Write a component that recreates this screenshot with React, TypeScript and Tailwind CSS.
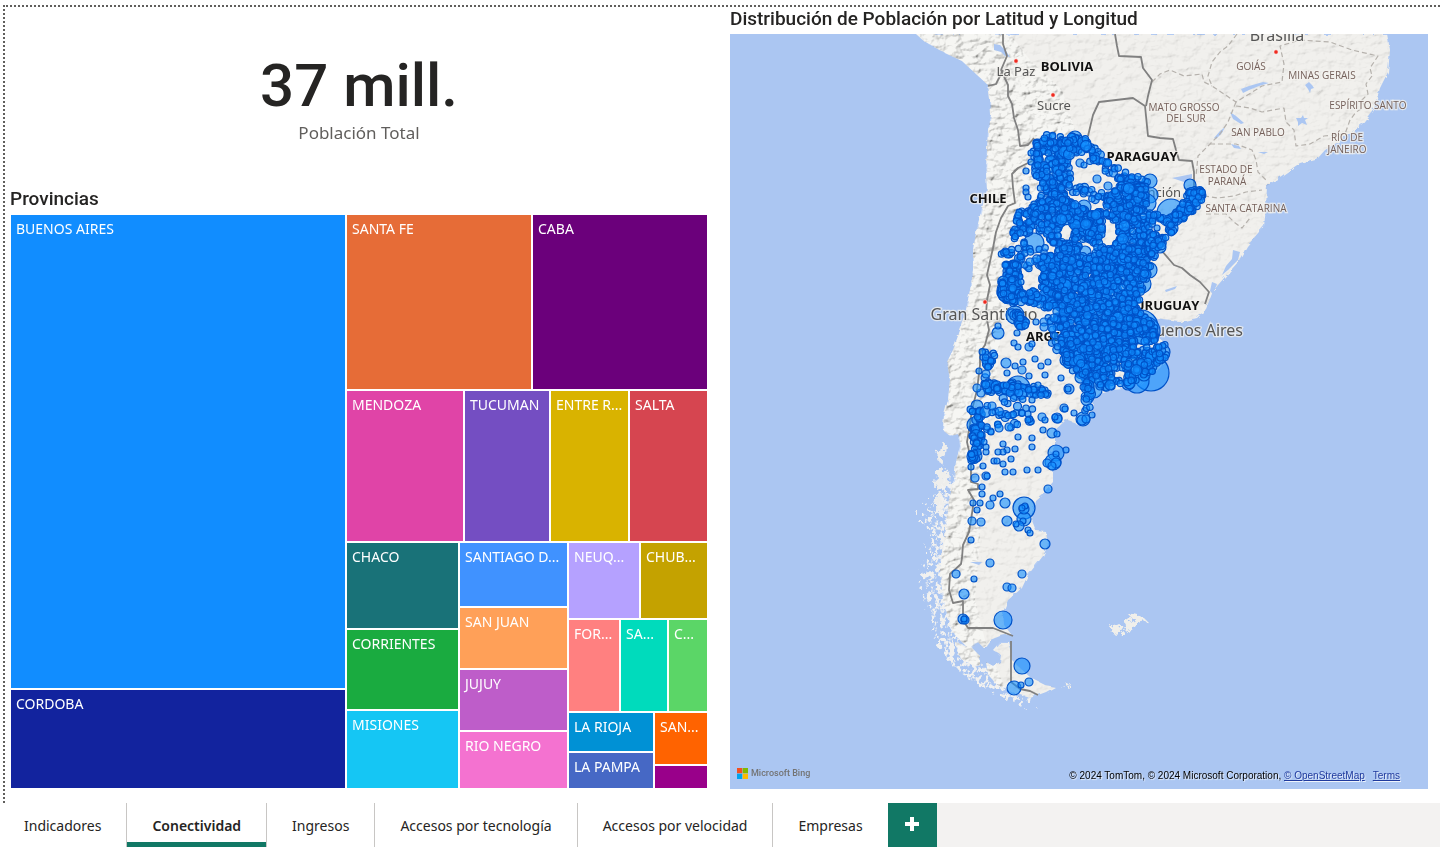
import React from 'react';
import { clsx } from 'clsx';

/* ---------- Treemap ---------- */

type Leaf = { size: number; label: string; color: string };
type Group = { size: number; dir: 'row' | 'col'; items: TreeNode[] };
type TreeNode = Leaf | Group;

const tree: Group = {
  size: 1,
  dir: 'row',
  items: [
    {
      size: 334,
      dir: 'col',
      items: [
        { size: 472, label: 'BUENOS AIRES', color: 'bg-[#118dff]' },
        { size: 98, label: 'CORDOBA', color: 'bg-[#12239e]' },
      ],
    },
    {
      size: 360,
      dir: 'col',
      items: [
        {
          size: 174,
          dir: 'row',
          items: [
            { size: 184, label: 'SANTA FE', color: 'bg-[#e66c37]' },
            { size: 174, label: 'CABA', color: 'bg-[#6b007b]' },
          ],
        },
        {
          size: 149,
          dir: 'row',
          items: [
            { size: 116, label: 'MENDOZA', color: 'bg-[#e044a7]' },
            { size: 84, label: 'TUCUMAN', color: 'bg-[#744ec2]' },
            { size: 77, label: 'ENTRE R...', color: 'bg-[#d9b300]' },
            { size: 77, label: 'SALTA', color: 'bg-[#d64550]' },
          ],
        },
        {
          size: 245,
          dir: 'row',
          items: [
            {
              size: 111,
              dir: 'col',
              items: [
                { size: 86, label: 'CHACO', color: 'bg-[#197278]' },
                { size: 79, label: 'CORRIENTES', color: 'bg-[#1aab40]' },
                { size: 77, label: 'MISIONES', color: 'bg-[#15c6f4]' },
              ],
            },
            {
              size: 107,
              dir: 'col',
              items: [
                { size: 64, label: 'SANTIAGO D...', color: 'bg-[#4092ff]' },
                { size: 60, label: 'SAN JUAN', color: 'bg-[#ffa058]' },
                { size: 60, label: 'JUJUY', color: 'bg-[#be5dc9]' },
                { size: 56, label: 'RIO NEGRO', color: 'bg-[#f472d0]' },
              ],
            },
            {
              size: 138,
              dir: 'col',
              items: [
                {
                  size: 75,
                  dir: 'row',
                  items: [
                    { size: 70, label: 'NEUQ...', color: 'bg-[#b5a1ff]' },
                    { size: 66, label: 'CHUB...', color: 'bg-[#c4a200]' },
                  ],
                },
                {
                  size: 91,
                  dir: 'row',
                  items: [
                    { size: 50, label: 'FOR...', color: 'bg-[#ff8080]' },
                    { size: 46, label: 'SA...', color: 'bg-[#00dbbc]' },
                    { size: 38, label: 'C...', color: 'bg-[#5bd667]' },
                  ],
                },
                {
                  size: 75,
                  dir: 'row',
                  items: [
                    {
                      size: 84,
                      dir: 'col',
                      items: [
                        { size: 38, label: 'LA RIOJA', color: 'bg-[#0091d5]' },
                        { size: 35, label: 'LA PAMPA', color: 'bg-[#4668c5]' },
                      ],
                    },
                    {
                      size: 52,
                      dir: 'col',
                      items: [
                        { size: 51, label: 'SAN...', color: 'bg-[#ff6300]' },
                        { size: 22, label: '', color: 'bg-[#99008a]' },
                      ],
                    },
                  ],
                },
              ],
            },
          ],
        },
      ],
    },
  ],
};

function TreeCell({ node }: { node: TreeNode }) {
  const style = { flexGrow: node.size };
  if ('items' in node) {
    return (
      <div
        style={style}
        className={clsx('flex min-h-0 min-w-0 basis-0 gap-[2px]', node.dir === 'row' ? 'flex-row' : 'flex-col')}
      >
        {node.items.map((child, i) => (
          <TreeCell key={i} node={child} />
        ))}
      </div>
    );
  }
  return (
    <div style={style} className={clsx('min-h-0 min-w-0 basis-0 overflow-hidden', node.color)}>
      {node.label && (
        <p className="whitespace-nowrap pl-[5px] pt-1 text-sm leading-5 text-white">{node.label}</p>
      )}
    </div>
  );
}

/* ---------- Map data ---------- */

type Pt = [number, number];
type Dot = [number, number, number];

function makeRandom(seed: number) {
  let s = seed;
  return () => {
    s = (s * 1664525 + 1013904223) % 4294967296;
    return s / 4294967296;
  };
}

function inside([x, y]: Pt, poly: Pt[]) {
  let hit = false;
  for (let i = 0, j = poly.length - 1; i < poly.length; j = i++) {
    const [xi, yi] = poly[i];
    const [xj, yj] = poly[j];
    if (yi > y !== yj > y && x < ((xj - xi) * (y - yi)) / (yj - yi) + xi) hit = !hit;
  }
  return hit;
}

const zones: { n: number; poly: Pt[] }[] = [
  { n: 230, poly: [[1037, 140], [1044, 134], [1062, 137], [1072, 150], [1068, 160], [1071, 178], [1064, 190], [1066, 202], [1040, 204], [1040, 182], [1034, 172], [1033, 150]] },
  { n: 40, poly: [[1060, 142], [1075, 135], [1086, 140], [1078, 152], [1065, 158]] },
  { n: 60, poly: [[1083, 136], [1090, 140], [1100, 154], [1112, 166], [1130, 172], [1150, 182], [1150, 190], [1130, 186], [1112, 178], [1098, 164], [1080, 158]] },
  { n: 26, poly: [[1068, 183], [1085, 186], [1105, 194], [1112, 190], [1112, 206], [1095, 200], [1070, 192]] },
  { n: 260, poly: [[1102, 205], [1120, 184], [1148, 186], [1148, 200], [1144, 215], [1152, 245], [1115, 247], [1118, 222], [1100, 214]] },
  { n: 380, poly: [[1020, 210], [1040, 202], [1066, 197], [1086, 210], [1102, 212], [1104, 247], [1060, 249], [1048, 240], [1036, 230], [1012, 240], [1014, 226]] },
  { n: 1500, poly: [[1040, 262], [1060, 248], [1080, 247], [1100, 247], [1150, 247], [1152, 262], [1146, 280], [1140, 296], [1138, 310], [1154, 322], [1156, 340], [1140, 346], [1112, 352], [1095, 378], [1085, 385], [1075, 376], [1062, 358], [1058, 325], [1055, 310], [1035, 304], [1025, 301], [1035, 292], [1042, 282]] },
  { n: 150, poly: [[1112, 350], [1140, 345], [1158, 348], [1152, 374], [1125, 386], [1088, 390], [1095, 375]] },
  { n: 110, poly: [[1169, 217], [1180, 207], [1190, 190], [1202, 190], [1204, 198], [1195, 210], [1180, 221], [1172, 224]] },
  { n: 45, poly: [[1140, 212], [1166, 212], [1172, 216], [1158, 236], [1160, 250], [1150, 262], [1146, 248], [1150, 230]] },
  { n: 24, poly: [[1172, 220], [1176, 228], [1160, 248], [1150, 258], [1152, 246]] },
  { n: 55, poly: [[1005, 262], [1018, 264], [1020, 278], [1006, 280]] },
  { n: 90, poly: [[1000, 282], [1018, 278], [1021, 298], [1008, 308], [1000, 298]] },
  { n: 24, poly: [[1020, 292], [1036, 288], [1040, 304], [1020, 304]] },
  { n: 10, poly: [[1001, 248], [1013, 248], [1013, 256], [1001, 256]] },
  { n: 28, poly: [[1020, 240], [1050, 240], [1044, 275], [1025, 272], [1016, 255]] },
  { n: 26, poly: [[1010, 312], [1018, 312], [1028, 324], [1020, 328]] },
  { n: 14, poly: [[1048, 315], [1060, 320], [1062, 352], [1052, 350]] },
  { n: 18, poly: [[981, 350], [996, 354], [992, 368], [984, 368]] },
  { n: 16, poly: [[984, 376], [996, 384], [994, 394], [984, 390]] },
  { n: 60, poly: [[996, 386], [1015, 381], [1048, 390], [1050, 396], [1020, 394], [998, 393]] },
  { n: 30, poly: [[970, 408], [978, 402], [984, 416], [980, 436], [970, 428]] },
  { n: 20, poly: [[971, 436], [982, 434], [982, 446], [974, 450]] },
  { n: 16, poly: [[971, 452], [980, 450], [978, 464], [971, 464]] },
  { n: 20, poly: [[1078, 378], [1092, 384], [1090, 408], [1084, 412], [1084, 390]] },
  { n: 16, poly: [[1154, 348], [1166, 344], [1168, 358], [1156, 364]] },
  { n: 34, poly: [[983, 398], [1030, 398], [1044, 416], [1020, 428], [986, 432]] },
];

const gaps: Dot[] = [
  [1066, 234, 6], [1110, 229, 5], [1108, 240, 6], [1086, 250, 5], [1090, 247, 4], [1034, 240, 7], [1160, 228, 6],
  [1095, 172, 8], [1083, 168, 7], [1140, 344, 3], [1120, 374, 4], [1030, 281, 8], [1024, 219, 3],
];

const places: Dot[] = [
  [1151, 373, 18], [1137, 381, 12], [1128, 384, 6], [1171, 213, 14], [1150, 195, 8], [1147, 203, 9], [1190, 185, 6], [1150, 181, 7],
  [1075, 138, 7], [1034, 243, 10], [1172, 228, 6], [1149, 270, 8], [1142, 284, 9], [1148, 238, 7], [1160, 247, 6], [1141, 327, 17],
  [1146, 331, 14], [1134, 322, 12], [1094, 390, 8], [1162, 352, 8], [1160, 358, 6], [1085, 252, 6], [1084, 207, 7], [1096, 215, 5],
  [1144, 375, 6], [1150, 366, 7], [1118, 355, 8], [1090, 350, 10], [1110, 385, 5], [1066, 360, 6], [1010, 291, 13], [1012, 271, 9],
  [1015, 315, 9], [1022, 323, 7], [998, 333, 6], [998, 326, 3], [1017, 333, 3], [1014, 343, 3], [1018, 347, 3], [1029, 347, 4],
  [1032, 344, 3], [1036, 322, 3], [1044, 322, 4], [1050, 322, 3], [1044, 327, 4], [1052, 328, 4], [1054, 318, 4], [1026, 188, 3],
  [1026, 192, 3], [1028, 197, 3], [1026, 171, 3], [1031, 153, 3], [1031, 162, 3], [1080, 163, 4], [1084, 165, 3], [1097, 179, 4],
  [1108, 186, 4], [1157, 228, 3], [1021, 282, 3], [1030, 262, 4], [1006, 363, 5], [1015, 366, 3], [1023, 362, 3], [1022, 370, 4],
  [1029, 376, 3], [1035, 359, 3], [1041, 366, 3], [1048, 362, 3], [1045, 375, 3], [1061, 378, 3], [1007, 373, 3], [979, 371, 3],
  [986, 374, 4], [1038, 385, 3], [1018, 388, 12], [1069, 389, 5], [1068, 389, 3], [1064, 408, 4], [1065, 409, 3], [1074, 413, 3],
  [1083, 419, 7], [1082, 420, 5], [1086, 419, 4], [1092, 415, 3], [1057, 418, 5], [1058, 419, 4], [1055, 417, 3], [1042, 417, 4],
  [1045, 420, 3], [1043, 430, 3], [1028, 414, 3], [1028, 420, 3], [1009, 427, 4], [999, 428, 4], [992, 406, 4], [981, 393, 4],
  [977, 388, 4], [977, 406, 6], [975, 425, 8], [991, 432, 3], [1052, 433, 5], [1057, 434, 3], [1018, 437, 3], [1032, 438, 3],
  [1032, 447, 3], [1003, 444, 3], [1015, 449, 3], [1007, 450, 3], [1003, 452, 3], [998, 452, 3], [986, 452, 3], [986, 447, 3],
  [984, 442, 3], [976, 456, 6], [994, 461, 3], [997, 461, 3], [1011, 459, 3], [1003, 464, 3], [983, 466, 3], [971, 467, 3],
  [1005, 472, 3], [1013, 472, 3], [1027, 470, 3], [1038, 470, 3], [986, 476, 4], [987, 476, 3], [975, 478, 4], [1056, 453, 8],
  [1053, 462, 8], [1047, 463, 4], [1056, 463, 5], [1052, 466, 4], [1056, 454, 3], [1066, 450, 3], [1048, 489, 4], [982, 487, 3],
  [982, 494, 3], [1000, 494, 3], [993, 498, 3], [1005, 503, 5], [990, 505, 4], [973, 503, 3], [980, 503, 3], [977, 510, 3],
  [972, 521, 4], [981, 522, 4], [1024, 508, 11], [1024, 509, 5], [1025, 506, 3], [1022, 508, 3], [1024, 519, 7], [1023, 521, 3],
  [1019, 526, 5], [1016, 524, 3], [1028, 530, 3], [1030, 533, 3], [1007, 521, 5], [1045, 544, 5], [971, 540, 3], [990, 563, 4],
  [956, 574, 4], [974, 579, 3], [1022, 574, 4], [1007, 587, 4], [1012, 588, 4], [964, 594, 5], [963, 619, 5], [965, 620, 4],
  [964, 619, 3], [1003, 620, 9], [1022, 666, 8], [1014, 688, 7], [1021, 685, 3], [1029, 682, 4], [1032, 400, 3],
];

function scatter(): Dot[] {
  const rnd = makeRandom(20240);
  const out: Dot[] = [];
  for (const { n, poly } of zones) {
    const xs = poly.map((p) => p[0]);
    const ys = poly.map((p) => p[1]);
    const x0 = Math.min(...xs);
    const y0 = Math.min(...ys);
    const w = Math.max(...xs) - x0;
    const h = Math.max(...ys) - y0;
    let placed = 0;
    for (let tries = 0; placed < n && tries < n * 12; tries++) {
      const x = x0 + rnd() * w;
      const y = y0 + rnd() * h;
      if (!inside([x, y], poly)) continue;
      if (gaps.some(([gx, gy, r]) => Math.hypot(gx - x, gy - y) < r + 2)) continue;
      const big = rnd();
      out.push([Math.round(x * 10) / 10, Math.round(y * 10) / 10, big > 0.97 ? 5.5 : big > 0.85 ? 4 : 3.2]);
      placed++;
    }
  }
  return out;
}

const dots: Dot[] = [...places.filter((p) => p[2] > 5), ...scatter(), ...places.filter((p) => p[2] <= 5)];

const mainland =
  'M916 34 L925 42 L945 53 L962 61 L975 73 L988 85 L990 100 L991 115 L988 130 L987 150 L986 172 L987 190 L982 208 L977 228 L973 250 L973 270 L971 285 L968 300 L964 320 L958 336 L953 350 L947 362 L950 380 L948 400 L944 415 L943 430 L950 436 L958 434 L960 446 L956 462 L954 480 L949 500 L947 520 L944 545 L940 568 L942 590 L944 606 L950 620 L954 634 L964 644 L970 650 L978 642 L984 648 L990 640 L1000 636 L1011 634 L1004 625 L1003 612 L1008 600 L1022 588 L1028 575 L1043 556 L1048 545 L1046 532 L1036 531 L1031 518 L1035 500 L1043 493 L1053 482 L1053 466 L1050 452 L1055 446 L1055 430 L1066 420 L1080 425 L1091 420 L1093 404 L1090 398 L1112 390 L1135 388 L1160 368 L1169 354 L1165 343 L1154 334 L1146 322 L1152 318 L1164 320 L1180 322 L1197 318 L1206 309 L1213 291 L1224 278 L1238 262 L1247 246 L1264 226 L1266 208 L1267 186 L1280 177 L1300 163 L1318 158 L1325 150 L1343 139 L1362 124 L1374 108 L1380 88 L1388 72 L1390 50 L1387 34 Z';
const fuego =
  'M993 650 L1000 642 L1009 642 L1011 650 L1012 660 L1020 668 L1031 678 L1045 685 L1055 687 L1046 692 L1030 698 L1012 692 L996 684 L988 674 L986 662 L993 666 L1000 662 L1001 655 Z M955 642 L972 648 L980 656 L980 666 L970 664 L960 658 Z';
const channels =
  'M941 441 l5 3 l-1 10 l-3 9 l-4 -2 l1 -10 z M937 472 l9 -4 l4 8 l-6 12 l-8 2 z M934 496 l10 -2 l2 12 l-9 8 z';
const fjords =
  'M948 470 L936 500 L918 522 L934 532 L928 556 L922 580 L928 606 L936 630 L938 645 L950 664 L968 678 L990 690 L1020 704 L1036 696 L1010 684 L984 668 L962 652 L950 620 L944 580 L952 520 L958 480 Z';
const andes =
  'M916 34 L1010 34 L1030 60 L1062 90 L1075 130 L1050 160 L1035 200 L1020 240 L1005 290 L1000 340 L996 380 L985 420 L982 480 L980 540 L975 600 L985 640 L1010 700 L960 690 L915 600 L915 480 L940 340 L965 250 L985 160 L985 90 Z';

const countryBorders = [
  'M1003 34 L1003 44 L1007 56 L1001 70 L1008 85 L1008 96 L1012 104 L1014 118 L1018 130 L1020 146 L1028 145 L1034 138',
  'M1034 160 L1018 168 L1012 174 L1013 188 L1015 203 L1008 206 L1001 218 L996 232 L993 248 L987 275 L990 285 L987 300 L986 315 L989 330 L985 345 L980 352 L980 365 L977 390 L972 410 L969 430 L967 442 L971 460 L971 482 L978 484 L978 489 L968 490 L974 500 L971 520 L969 532 L963 545 L962 558 L961 564 L950 574 L949 590 L953 603 L963 601 L963 620 L968 628 L993 628 L1013 636',
  'M1011 641 L1011 682 L1020 689 L1030 691 L1038 695',
  'M1088 136 L1093 115 L1099 102 L1133 98 L1145 106 L1148 136 L1160 138 L1173 139 L1176 150 L1179 160 L1192 161 L1194 172 L1194 190',
  'M1115 34 L1117 46 L1119 56 L1141 57 L1143 68 L1152 80 L1148 96 L1146 106',
  'M1162 251 L1174 265 L1182 268 L1190 275 L1200 282 L1209 292 L1205 304',
  'M1003 70 L996 84 L988 86',
];
const stateBorders = [
  'M1237 34 L1228 46 L1220 52 L1212 62 L1208 76 L1212 86 L1236 102 L1246 96 L1262 86 L1282 82 L1284 64 L1280 46 L1300 40 L1330 42 L1352 50 L1378 56 L1370 68 L1372 76',
  'M1152 82 L1160 74 L1170 70 L1184 76 L1202 74 L1204 82 L1212 86',
  'M1236 102 L1228 122 L1220 134 L1208 146 L1198 156 L1196 176',
  'M1236 106 L1250 108 L1262 112 L1284 108 L1286 122 L1294 130 L1296 146 L1310 144 L1324 136 L1345 134 L1350 120 L1356 112 L1366 106',
  'M1210 144 L1236 144 L1252 150 L1256 160 L1258 172 L1266 180',
  'M1204 196 L1218 198 L1234 196 L1246 192 L1262 190',
  'M1206 214 L1226 214 L1234 222 L1242 228 L1250 218',
  'M1372 76 L1366 84 L1368 94 L1362 100 L1366 110',
];

type MapLabel = { x: number; y: number; text: string; kind: 'country' | 'city' | 'state' | 'metro' };
const labels: MapLabel[] = [
  { x: 1067, y: 71, text: 'BOLIVIA', kind: 'country' },
  { x: 1142, y: 161, text: 'PARAGUAY', kind: 'country' },
  { x: 988, y: 203, text: 'CHILE', kind: 'country' },
  { x: 1167, y: 310, text: 'URUGUAY', kind: 'country' },
  { x: 1064, y: 341, text: 'ARGENTINA', kind: 'country' },
  { x: 1016, y: 76, text: 'La Paz', kind: 'city' },
  { x: 1054, y: 110, text: 'Sucre', kind: 'city' },
  { x: 1153, y: 197, text: 'Asunción', kind: 'city' },
  { x: 1277, y: 41, text: 'Brasília', kind: 'metro' },
  { x: 984, y: 320, text: 'Gran Santiago', kind: 'metro' },
  { x: 1194, y: 336, text: 'Buenos Aires', kind: 'metro' },
  { x: 1251, y: 70, text: 'GOIÁS', kind: 'state' },
  { x: 1322, y: 79, text: 'MINAS GERAIS', kind: 'state' },
  { x: 1368, y: 109, text: 'ESPÍRITO SANTO', kind: 'state' },
  { x: 1184, y: 111, text: 'MATO GROSSO', kind: 'state' },
  { x: 1186, y: 122, text: 'DEL SUR', kind: 'state' },
  { x: 1258, y: 136, text: 'SAN PABLO', kind: 'state' },
  { x: 1347, y: 141, text: 'RÍO DE', kind: 'state' },
  { x: 1347, y: 153, text: 'JANEIRO', kind: 'state' },
  { x: 1226, y: 173, text: 'ESTADO DE', kind: 'state' },
  { x: 1227, y: 185, text: 'PARANÁ', kind: 'state' },
  { x: 1246, y: 212, text: 'SANTA CATARINA', kind: 'state' },
];
const labelStyle = {
  country: "fill-[#111111] font-['Open_Sans',sans-serif] text-[13px] font-bold",
  city: "fill-[#555555] font-['Noto_Sans',sans-serif] text-[13px]",
  metro: "fill-[#555555] font-['Noto_Sans',sans-serif] text-base",
  state: "fill-[#75615b] font-['Open_Sans',sans-serif] text-[10px] font-medium",
};

function MapCanvas() {
  return (
    <svg
      viewBox="730 34 698 755"
      preserveAspectRatio="xMidYMid slice"
      role="img"
      aria-label="Mapa de población"
      className="absolute inset-0 h-full w-full"
    >
      <defs>
        <clipPath id="andes"><path d={andes} /></clipPath>
        <clipPath id="land"><path d={mainland} /><path d={fuego} /></clipPath>
        <filter id="coast" x="-5%" y="-5%" width="110%" height="110%">
          <feTurbulence type="fractalNoise" baseFrequency="0.12" numOctaves="3" seed="4" />
          <feDisplacementMap in="SourceGraphic" scale="5" />
        </filter>
        <filter id="rough" x="-30%" y="-10%" width="160%" height="120%">
          <feTurbulence type="fractalNoise" baseFrequency="0.16" numOctaves="3" seed="9" />
          <feDisplacementMap in="SourceGraphic" scale="14" />
        </filter>
        <filter id="archipelago" x="-10%" y="-5%" width="120%" height="110%">
          <feTurbulence type="fractalNoise" baseFrequency="0.22 0.18" numOctaves="3" seed="31" result="n" />
          <feColorMatrix in="n" type="matrix" values="0 0 0 0 0  0 0 0 0 0  0 0 0 0 0  9 0 0 0 -4.1" result="mask" />
          <feDisplacementMap in="SourceGraphic" in2="n" scale="26" result="shape" />
          <feComposite in="shape" in2="mask" operator="in" />
        </filter>
        <filter id="relief" x="0" y="0" width="100%" height="100%">
          <feTurbulence type="fractalNoise" baseFrequency="0.1 0.14" numOctaves="4" seed="12" />
          <feColorMatrix type="matrix" values="0 0 0 0 0  0 0 0 0 0  0 0 0 0 0  1 0 0 0 0" />
          <feDiffuseLighting surfaceScale="5" lightingColor="#ffffff" diffuseConstant="1.25">
            <feDistantLight azimuth="225" elevation="52" />
          </feDiffuseLighting>
        </filter>
      </defs>
      <rect x="730" y="34" width="698" height="755" fill="#abc6f2" />
      <g filter="url(#rough)">
        <path d={channels} fill="#eeeeec" />
      </g>
      <path d={fjords} fill="#f1f1f0" filter="url(#archipelago)" />
      <g filter="url(#coast)">
        <path d={mainland} fill="#f0efeb" />
        <path d={fuego} fill="#f0efeb" />
      </g>
      <g filter="url(#rough)">
        <path
          d="M1111 628 l8 -4 l6 3 l-4 6 l-8 1 z M1125 622 l10 -7 l8 2 l4 4 l-10 2 l-4 8 l-8 1 l2 -6 z"
          fill="#f0efeb"
        />
        <path d="M1062 687 l10 -2 l-1 2 l-10 2 z" fill="#f0efeb" />
      </g>
      <g clipPath="url(#land)">
        <rect x="900" y="34" width="500" height="680" filter="url(#relief)" opacity="0.1" className="mix-blend-multiply" />
        <g clipPath="url(#andes)">
          <rect x="900" y="34" width="190" height="680" filter="url(#relief)" opacity="0.36" className="mix-blend-multiply" />
        </g>
      </g>
      <g fill="#abc6f2">
        <path d="M994 44 l6 1 l6 6 l4 6 l-5 -1 l-4 -4 l-7 -2 z" />
        <path d="M1241 89 l8 -3 l14 -4 l6 1 l-10 3 l-10 4 l-6 3 z" />
        <path d="M1230 112 l6 4 l8 7 l-3 1 l-8 -5 z M1214 138 l6 -7 l5 -4 l-3 6 l-6 6 z" />
        <path d="M1296 118 l5 0 l2 -3 l1 3 l4 0 l-3 2 l2 5 l-5 -2 l-4 3 l0 -4 z M1305 85 l4 -3 l3 3 l2 3 l-3 1 l-1 4 l-2 -4 z" />
        <path d="M1231 144 l8 2 l2 3 l-7 -1 z M1258 152 l10 0 l-4 2 z" />
        <path d="M1233 250 l7 2 l-2 8 l-10 10 l-6 5 l4 -9 l6 -7 z M1212 282 l5 2 l-4 10 l-3 -3 z M1165 290 l12 -4 l-2 3 l-9 3 z" />
        <path d="M970 562 l12 0 l-3 3 z M1172 178 l20 -4 l0 4 l-8 4 z" />
      </g>
      <g fill="none" stroke="#b5b1ac" strokeWidth="1.2" strokeDasharray="5 3" strokeLinejoin="round">
        {stateBorders.map((d) => <path key={d} d={d} />)}
      </g>
      <g fill="none" stroke="#808080" strokeWidth="1.8" strokeLinejoin="round">
        {countryBorders.map((d) => <path key={d} d={d} />)}
      </g>
      <g fill="#ee2a1f" stroke="#ffffff" strokeWidth="0.6">
        <circle cx="1016" cy="61" r="2.2" />
        <circle cx="1053" cy="95" r="2.2" />
        <circle cx="1276" cy="52" r="2.2" />
        <circle cx="985" cy="302" r="2.2" />
      </g>
      <g textAnchor="middle" stroke="#f3f2ee" strokeOpacity="0.75" strokeWidth="2.5" paintOrder="stroke">
        {labels.map((l) => (
          <text key={l.text} x={l.x} y={l.y} className={labelStyle[l.kind]}>{l.text}</text>
        ))}
      </g>
      <g fill="#118dff" fillOpacity="0.6" stroke="#0052c8" strokeWidth="1.2">
        {dots.map(([x, y, r], i) => <circle key={i} cx={x} cy={y} r={r} />)}
      </g>
    </svg>
  );
}

/* ---------- Page ---------- */

const tabs = ['Indicadores', 'Conectividad', 'Ingresos', 'Accesos por tecnología', 'Accesos por velocidad', 'Empresas'];

function SectionTitle({ children }: { children: React.ReactNode }) {
  return <h2 className="whitespace-nowrap font-['Roboto',sans-serif] text-[19px] font-medium leading-6 text-[#252423]">{children}</h2>;
}

export default function App() {
  const [active, setActive] = React.useState('Conectividad');
  return (
    <div className="flex min-h-screen flex-col bg-white font-['Noto_Sans','Open_Sans',sans-serif] text-[#252423]">
      <main className="ml-[3px] mt-[5px] flex flex-1 gap-[22px] border-l-2 border-t-2 border-dotted border-[#605e5c] pb-[14px] pl-[5px] pr-3">
        <section className="flex min-w-0 flex-1 flex-col">
          <div className="flex h-[180px] flex-col items-center pt-[46px]">
            <p className="font-['Roboto',sans-serif] text-6xl font-medium leading-[66px]">37 mill.</p>
            <p className="text-[17px] leading-7 text-[#605e5c]">Población Total</p>
          </div>
          <SectionTitle>Provincias</SectionTitle>
          <div className="mt-[3px] flex min-h-[480px] flex-1 p-px">
            <TreeCell node={tree} />
          </div>
        </section>

        <section className="flex min-w-0 flex-1 flex-col">
          <div className="pb-[3px]">
            <SectionTitle>Distribución de Población por Latitud y Longitud</SectionTitle>
          </div>
          <div className="relative flex min-h-[480px] flex-1 items-end justify-between overflow-hidden bg-[#abc6f2]">
            <MapCanvas />
            <div className="relative mb-2 ml-[7px] flex items-center gap-[3px] text-[#737373]">
              <svg viewBox="0 0 11 11" className="size-[11px]" aria-hidden="true">
                <path fill="#f25022" d="M0 0h5.3v5.3H0z" />
                <path fill="#7fba00" d="M5.7 0H11v5.3H5.7z" />
                <path fill="#00a4ef" d="M0 5.7h5.3V11H0z" />
                <path fill="#ffb900" d="M5.7 5.7H11V11H5.7z" />
              </svg>
              <span className="font-['Roboto',sans-serif] text-[9px] font-medium leading-4">Microsoft Bing</span>
            </div>
            <p className="relative mb-[5px] mr-7 font-['Liberation_Sans',sans-serif] text-[10px] leading-4 text-black [text-shadow:1px_1px_1px_rgba(255,255,255,0.8)]">
              © 2024 TomTom, © 2024 Microsoft Corporation,{' '}
              <a href="#osm" className="text-[#1f3a9e] underline">© OpenStreetMap</a>
              <a href="#terms" className="ml-2 text-[#1f3a9e] underline">Terms</a>
            </p>
          </div>
        </section>
      </main>

      <nav className="flex h-11 bg-[#f3f2f1]" aria-label="Páginas">
        {tabs.map((tab, i) => (
          <button
            key={tab}
            type="button"
            onClick={() => setActive(tab)}
            aria-current={tab === active ? 'page' : undefined}
            className={clsx(
              'relative bg-white px-[25px] pt-[2px] text-sm leading-5',
              i === 0 && 'pl-6',
              i < tabs.length - 1 && 'border-r border-[#c8c6c4]',
              tab === active && 'font-semibold'
            )}
          >
            {tab}
            {tab === active && <span className="absolute inset-x-0 bottom-0 h-[5px] bg-[#117865]" />}
          </button>
        ))}
        <button type="button" aria-label="Nueva página" className="flex w-[49px] items-center justify-center bg-[#117865] pb-[3px]">
          <svg viewBox="0 0 14 14" className="size-[14px]" aria-hidden="true">
            <path fill="#ffffff" d="M5 0h4v5h5v4H9v5H5V9H0V5h5z" />
          </svg>
        </button>
      </nav>
    </div>
  );
}
